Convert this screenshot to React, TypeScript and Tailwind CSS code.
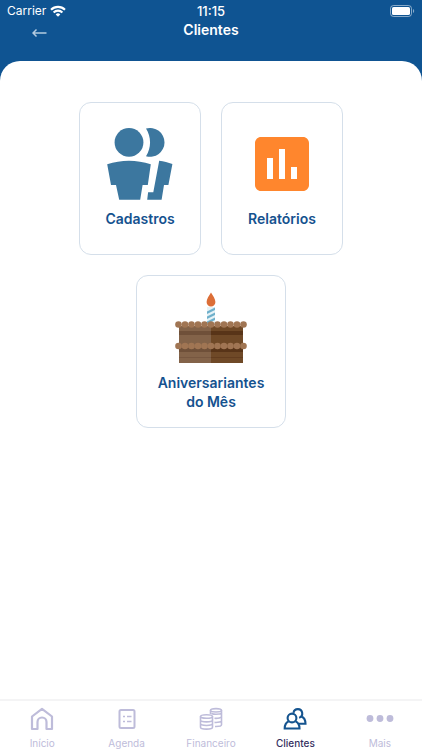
import type { ReactNode } from 'react';
import { MdAssessment } from 'react-icons/md';

interface MenuCardProps {
  className: string;
  label: string;
  children: ReactNode;
}

interface TabProps {
  label: string;
  active?: boolean;
  children: ReactNode;
}

const BEADS = [0, 1, 2, 3, 4, 5, 6, 7, 8, 9, 10];

function StatusBar() {
  return (
    <div className="grid h-[22px] grid-cols-3 items-center px-[7px] text-[12px] leading-[14px]">
      <div className="flex items-center gap-1">
        <span>Carrier</span>
        <svg className="h-3 w-4" viewBox="0 0 16 12" fill="none" stroke="currentColor" strokeWidth="2.1">
          <path d="M1 4.8a9.9 9.9 0 0 1 14 0" />
          <path d="M3.6 7.5a6.2 6.2 0 0 1 8.8 0" />
          <path d="M8 11.8 5.7 9.4a3.3 3.3 0 0 1 4.6 0z" fill="currentColor" stroke="none" />
        </svg>
      </div>
      <span className="text-center text-[13px] font-medium">11:15</span>
      <svg className="h-3 w-[25px] justify-self-end" viewBox="0 0 25 12">
        <rect x="0.5" y="0.5" width="21" height="11" rx="3" fill="none" stroke="#fff" strokeOpacity="0.5" />
        <rect x="2" y="2" width="18" height="8" rx="1.6" fill="#fff" />
        <path d="M23 4v4c1.6-.7 1.6-3.3 0-4z" fill="#fff" fillOpacity="0.5" />
      </svg>
    </div>
  );
}

function PeopleIcon() {
  return (
    <svg className="size-[72px]" viewBox="0 0 72 72" fill="#3c779f">
      <circle cx="25" cy="14.4" r="14.4" />
      <path d="M42 .6a14.4 14.4 0 1 1 0 27.6c5.4-8.5 5.4-19.1 0-27.6z" />
      <path d="M3.2 36.3c14-4.9 29.400-4.9 43.6 0L43.8 57h-5.2l-2.400 14.8H15.2L12 57H7z" />
      <path d="M55.2 32.8c4.6.6 9 1.7 13.2 3.3L64.4 57H60l-2.4 14.8H43.2l.9-7.6h5.2z" />
    </svg>
  );
}

function CakeIcon() {
  return (
    <svg className="size-[72px]" viewBox="0 0 72 72">
      {/* Flame and candle */}
      <path d="M36 .5c2 3.4 4.4 6.200 4.4 9.600a4.400 4.400 0 0 1-8.800 0c0-3.400 2.400-6.200 4.400-9.600z" fill="#dc6e37" />
      <path d="M32 15h8v16h-8z" fill="#e6f2f6" />
      <path
        d="M32 19.500l8-4v2.600l-8 4zM32 24.500l8-4v2.600l-8 4zM32 29.500l8-4v2.600l-8 4z"
        fill="#6fb0cb"
      />
      {/* Layers */}
      <path d="M4 34h32v37H4z" fill="#836349" />
      <path d="M36 34h32v37H36z" fill="#6f4927" />
      <path d="M4 39h32v4H4zM4 56h32v4H4z" fill="#6f5039" />
      <path d="M36 39h32v4H36zM36 56h32v4H36z" fill="#583418" />
      <path d="M4 65h32v1H4z" fill="#775740" />
      <path d="M36 65h32v1H36z" fill="#633d1f" />
      {BEADS.map((i) => (
        <g key={i} fill="#a07553">
          <circle cx={3.5 + i * 6.5} cy="32.500" r="3.300" />
          <circle cx={3.5 + i * 6.5} cy="54" r="3.300" />
        </g>
      ))}
    </svg>
  );
}

function MenuCard({ className, label, children }: MenuCardProps) {
  return (
    <button
      type="button"
      className={[
        className,
        'flex h-[153px] flex-col items-center justify-center gap-[9px] rounded-xl border border-[#d5dfea] pb-px text-[14px] leading-[19px] font-semibold text-[#15528f]',
      ].join(' ')}
    >
      {children}
      <span>{label}</span>
    </button>
  );
}

function Tab({ label, active, children }: TabProps) {
  return (
    <a
      href="#"
      aria-current={active ? 'page' : undefined}
      className={[
        'flex flex-1 flex-col items-center gap-1.5 text-[10px] leading-[12px]',
        active ? 'font-medium text-[#352f61]' : 'text-[#bebcda]',
      ].join(' ')}
    >
      {children}
      <span>{label}</span>
    </a>
  );
}

export default function App() {
  return (
    <div className="flex min-h-screen flex-col bg-[#0f5492] font-['Inter',sans-serif]">
      <header className="text-white">
        <StatusBar />
        <div className="grid h-[39px] grid-cols-[1fr_auto_1fr] items-start px-8">
          <button type="button" aria-label="Voltar" className="mt-1.5 w-4 text-[#b4cbe0]">
            <svg className="h-[10px] w-4" viewBox="0 0 16 10" fill="none" stroke="currentColor" strokeWidth="1.5">
              <path d="M14.500 5H1M4.500 1.500 1 5l3.500 3.500" />
            </svg>
          </button>
          <h1 className="text-[14px] leading-4 font-semibold">Clientes</h1>
        </div>
      </header>

      <main className="flex flex-1 flex-col items-center gap-5 rounded-t-[20px] bg-white pt-[41px]">
        <div className="flex gap-5">
          <MenuCard className="w-[122px]" label="Cadastros">
            <PeopleIcon />
          </MenuCard>
          <MenuCard className="w-[122px]" label="Relatórios">
            <MdAssessment size={72} color="#ff862d" />
          </MenuCard>
        </div>
        <MenuCard className="w-[150px] px-4" label="Aniversariantes do Mês">
          <CakeIcon />
        </MenuCard>
      </main>

      <nav className="flex border-t-2 border-[#f4f4f5] bg-white pt-1.5 pb-px">
        <Tab label="Início">
          <svg className="size-6" viewBox="0 0 24 24" fill="none" stroke="currentColor" strokeWidth="2.200" strokeLinejoin="round">
            <path d="M2 9.500 12 1.800l10 7.700V22h-5.500v-7a4.500 4.500 0 0 0-9 0v7H2z" />
          </svg>
        </Tab>
        <Tab label="Agenda">
          <svg className="size-6" viewBox="0 0 24 24" fill="none" stroke="currentColor" strokeWidth="2">
            <rect x="4.500" y="3" width="15" height="18" rx="1.500" />
            <path d="M8 9.500h2M12 9.500h4.500M8 14.500h2M12 14.500h4.500" strokeWidth="1.600" />
          </svg>
        </Tab>
        <Tab label="Financeiro">
          <svg className="size-6" viewBox="0 0 24 24" fill="none" stroke="currentColor" strokeWidth="1.600">
            <ellipse cx="17" cy="3.300" rx="5.500" ry="1.700" />
            <path d="M11.500 3.300v4M22.500 3.300v14.500c0 1.100-2.500 1.700-5.500 1.700h-1M12.500 6.400c1.200.5 2.800.8 4.500.8 3 0 5.500-.7 5.500-1.700M15.500 11.300c4 .2 7-.5 7-1.700M15.500 15.400c4 .2 7-.5 7-1.700" />
            <ellipse cx="7.500" cy="9.500" rx="6" ry="1.800" />
            <path d="M1.500 9.500v10.700c0 1.200 2.700 1.900 6 1.900s6-.7 6-1.900V9.500M1.500 13c0 1.200 2.700 1.900 6 1.900s6-.7 6-1.900M1.500 16.600c0 1.200 2.700 1.900 6 1.900s6-.7 6-1.900" />
          </svg>
        </Tab>
        <Tab label="Clientes" active>
          <svg className="size-6" viewBox="0 0 24 24" fill="none" stroke="#15548f" strokeWidth="2.100">
            <circle cx="9" cy="11" r="4.400" />
            <path d="M5.500 14.500c-2.400 1-3.800 3.300-3.800 7h14.800c0-3.700-1.400-6-3.800-7" />
            <path d="M10.500 5.800a4.400 4.400 0 1 1 5.600 4.900M18.500 9.500c2.700 1.200 4 3.600 4 7.300H16" />
          </svg>
        </Tab>
        <Tab label="Mais">
          <svg className="h-6 w-7" viewBox="0 0 28 24" fill="currentColor">
            <circle cx="4" cy="11.500" r="3.400" />
            <circle cx="14" cy="11.500" r="3.400" />
            <circle cx="24" cy="11.500" r="3.400" />
          </svg>
        </Tab>
      </nav>
    </div>
  );
}
